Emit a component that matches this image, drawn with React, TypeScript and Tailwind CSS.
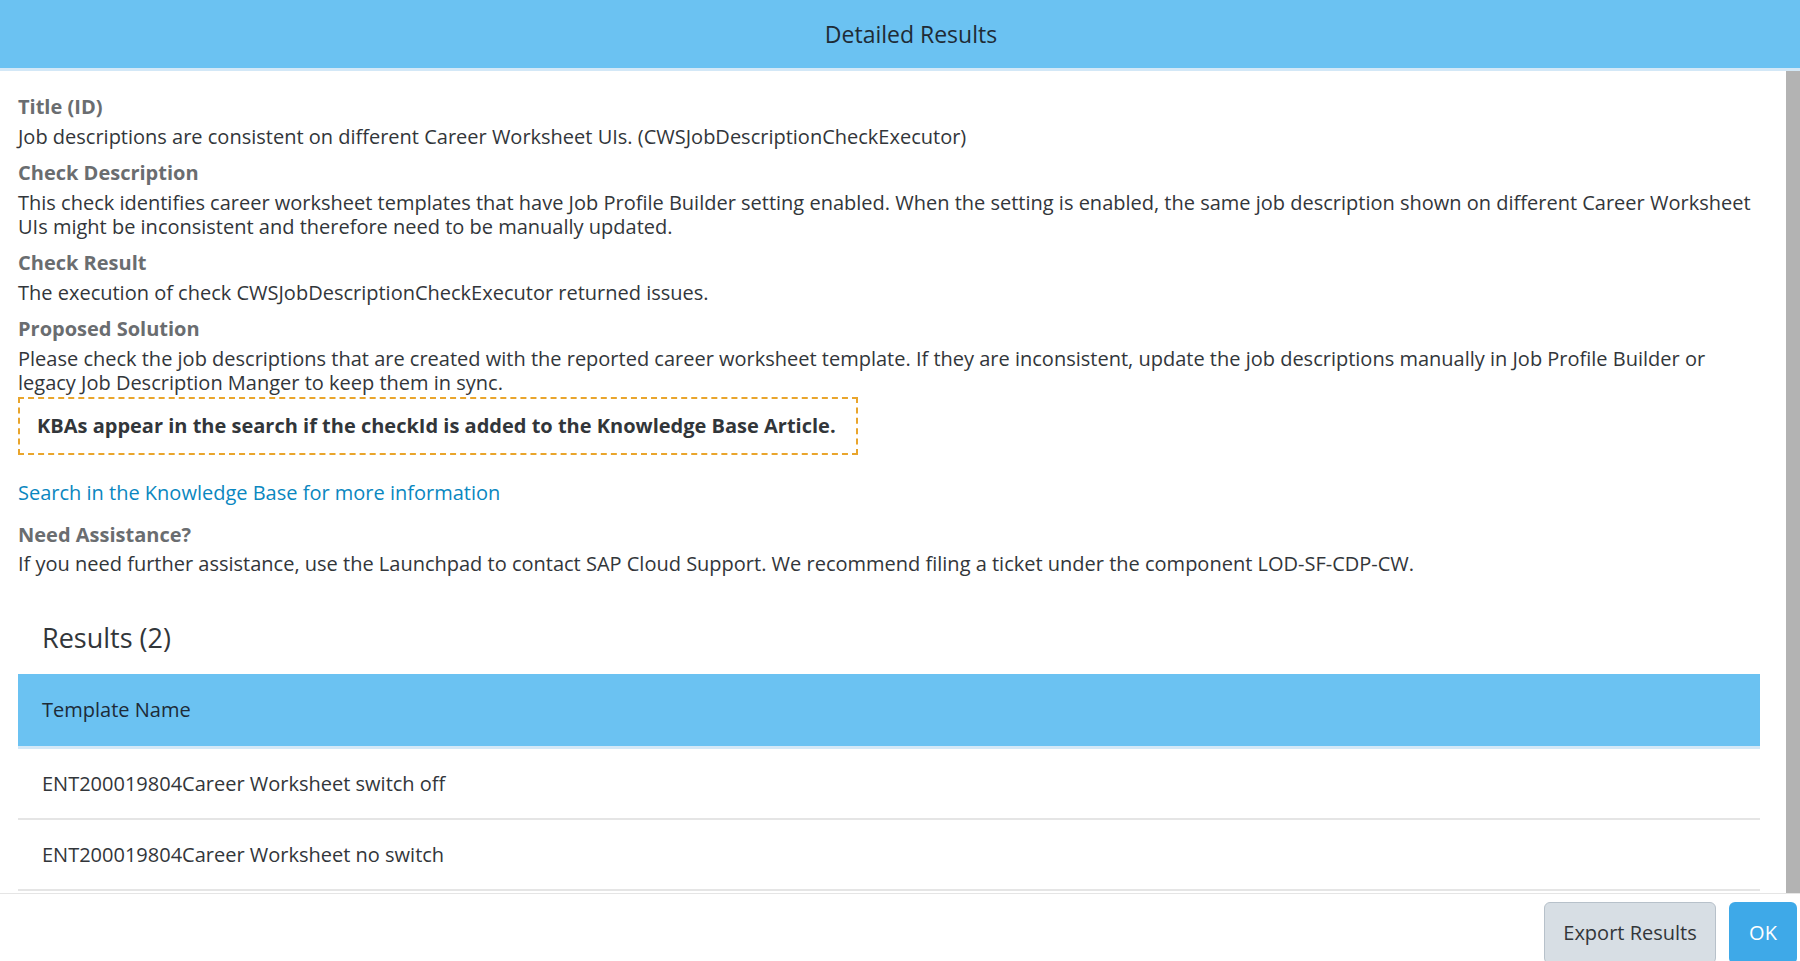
import React from "react";

const sections = [
  {
    label: "Title (ID)",
    body: "Job descriptions are consistent on different Career Worksheet UIs. (CWSJobDescriptionCheckExecutor)",
  },
  {
    label: "Check Description",
    body: "This check identifies career worksheet templates that have Job Profile Builder setting enabled. When the setting is enabled, the same job description shown on different Career Worksheet UIs might be inconsistent and therefore need to be manually updated.",
  },
  {
    label: "Check Result",
    body: "The execution of check CWSJobDescriptionCheckExecutor returned issues.",
  },
  {
    label: "Proposed Solution",
    body: "Please check the job descriptions that are created with the reported career worksheet template. If they are inconsistent, update the job descriptions manually in Job Profile Builder or legacy Job Description Manger to keep them in sync.",
  },
];

const rows = ["ENT200019804Career Worksheet switch off", "ENT200019804Career Worksheet no switch"];

export default function App() {
  return (
    <div className="w-[1800px] h-[961px] flex flex-col bg-white overflow-hidden font-['Open_Sans',sans-serif] text-[#32363a]">
      <header className="h-[68px] shrink-0 bg-[#6bc2f2] flex items-center justify-center pl-[22px] text-[23px] text-[#1e2b36]">
        Detailed Results
      </header>
      <div className="h-[3px] shrink-0 bg-[#d3e8f7]" />

      <div className="flex flex-1 min-h-0">
        <main className="flex-1 overflow-hidden pl-[18px] pr-[26px] pt-[24px]">
          {sections.map((s, i) => (
            <div key={s.label} className={i === 0 ? "" : "mt-[12px]"}>
              <div className="text-[20px] leading-[24px] font-bold text-[#6a6d70]">{s.label}</div>
              <p className="mt-[6px] text-[20px] leading-[24px]">{s.body}</p>
            </div>
          ))}

          <div className="mt-[2px] w-[840px] border-2 border-dashed border-[#e9a52c] px-[17px] py-[15px]">
            <p className="text-[20px] leading-[24px] font-bold text-[#32363a]">
              KBAs appear in the search if the checkId is added to the Knowledge Base Article.
            </p>
          </div>

          <a href="#" className="block mt-[26px] text-[20px] leading-[24px] text-[#0a87c0]">
            Search in the Knowledge Base for more information
          </a>

          <div className="mt-[18px] text-[20px] leading-[24px] font-bold text-[#6a6d70]">Need Assistance?</div>
          <p className="mt-[5px] text-[20px] leading-[24px]">
            If you need further assistance, use the Launchpad to contact SAP Cloud Support. We recommend filing a ticket under the component LOD-SF-CDP-CW.
          </p>

          <h2 className="mt-[46px] pl-[24px] text-[27px] leading-[32px]">Results (2)</h2>

          <div className="mt-[20px]">
            <div className="h-[75px] bg-[#6bc2f2] border-b-[3px] border-[#d3e8f7] flex items-center px-[24px] text-[20px] text-[#1d2b38]">
              Template Name
            </div>
            {rows.map((r) => (
              <div key={r} className="h-[71px] border-b-2 border-[#e5e5e5] flex items-center px-[24px] text-[20px]">
                {r}
              </div>
            ))}
          </div>
        </main>
        <div className="w-[14px] shrink-0 bg-[#b3b3b3]" />
      </div>

      <footer className="h-[68px] shrink-0 border-t border-[#e5e5e5] flex justify-end gap-[13px] pr-[3px] pt-[8px]">
        <button className="w-[172px] h-[62px] rounded-[6px] border border-[#b7c1ca] bg-[#d7dee4] text-[20px] text-[#32363a]">
          Export Results
        </button>
        <button className="w-[68px] h-[62px] rounded-[6px] bg-[#3ea9e8] text-[20px] text-white">
          OK
        </button>
      </footer>
    </div>
  );
}
